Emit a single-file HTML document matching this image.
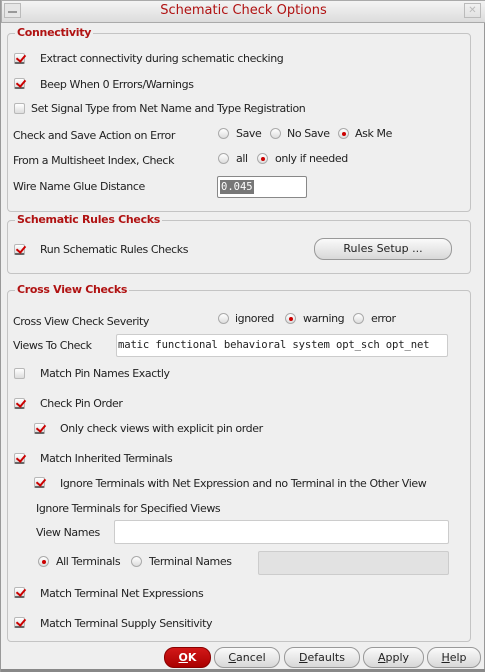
<!DOCTYPE html>
<html><head><style>
*{box-sizing:border-box;margin:0;padding:0}
body{width:485px;height:672px;background:#efefef;font-family:"DejaVu Sans","Liberation Sans",sans-serif;font-size:11px;color:#222;position:relative;overflow:hidden;border-left:1px solid #999;border-right:1px solid #999}
.a{position:absolute;white-space:nowrap}
.t{position:absolute;white-space:nowrap;line-height:13px;letter-spacing:-0.4px}
.box{position:absolute;border:1px solid #c4c4c4;border-radius:4px}
.lg{position:absolute;background:#efefef;color:#b01212;font-weight:bold;padding:0 2px;line-height:13px;font-size:11px;letter-spacing:-0.3px}
.cb{position:absolute;width:11px;height:11px;border:1px solid #b8b8b8;border-radius:2px;background:linear-gradient(#fff,#ddd)}
.cb.on::after{content:"";position:absolute;left:3px;top:-1px;width:4px;height:7px;border:solid #c00;border-width:0 2px 2px 0;transform:rotate(40deg)}
.cb.on{border-bottom:2px solid #666}
.rb{position:absolute;width:11px;height:11px;border:1px solid #aaa;border-radius:50%;background:linear-gradient(#fff,#ddd)}
.rb.on::after{content:"";position:absolute;left:2.5px;top:2.5px;width:4px;height:4px;border-radius:50%;background:#c00}
.in{position:absolute;background:#fff;border:1px solid #ccc;border-radius:2px}
.btn{position:absolute;border:1px solid #999;border-radius:10px;background:linear-gradient(#fafafa,#d8d8d8);text-align:center;line-height:19px;font-size:11px}
</style></head><body>
<div class="a" style="left:0;top:0;width:485px;height:23px;background:linear-gradient(#f4f4f4,#dcdcdc);border:1px solid #aaa"></div>
<div class="a" style="left:3px;top:3px;width:17px;height:15px;border:1px solid #bbb;background:#e6e6e6"></div>
<div class="a" style="left:7px;top:11px;width:9px;height:2px;background:#999"></div>
<div class="a" style="left:463px;top:3px;width:17px;height:15px;border:1px solid #bbb;color:#bbb;font-size:10px;text-align:center;line-height:14px">✕</div>
<div class="a" style="left:0;width:485px;top:3px;text-align:center;color:#b01212;font-size:13px">Schematic Check Options</div>

<div class="box" style="left:6px;top:33px;width:464px;height:179px"></div>
<div class="lg" style="left:14px;top:26px">Connectivity</div>
<div class="cb on" style="left:13px;top:53px"></div><div class="t" style="left:39px;top:52px">Extract connectivity during schematic checking</div>
<div class="cb on" style="left:13px;top:78px"></div><div class="t" style="left:39px;top:78px">Beep When 0 Errors/Warnings</div>
<div class="cb" style="left:13px;top:103px"></div><div class="t" style="left:30px;top:102px">Set Signal Type from Net Name and Type Registration</div>
<div class="t" style="left:12px;top:129px">Check and Save Action on Error</div>
<div class="rb" style="left:217px;top:128px"></div><div class="t" style="left:235px;top:127px">Save</div>
<div class="rb" style="left:269px;top:128px"></div><div class="t" style="left:286px;top:127px">No Save</div>
<div class="rb on" style="left:337px;top:128px"></div><div class="t" style="left:354px;top:127px">Ask Me</div>
<div class="t" style="left:12px;top:154px">From a Multisheet Index, Check</div>
<div class="rb" style="left:217px;top:153px"></div><div class="t" style="left:235px;top:152px">all</div>
<div class="rb on" style="left:256px;top:153px"></div><div class="t" style="left:274px;top:152px">only if needed</div>
<div class="t" style="left:12px;top:180px">Wire Name Glue Distance</div>
<div class="in" style="left:216px;top:176px;width:90px;height:22px;border-color:#888"></div>
<div class="a" style="left:219px;top:180px;background:#777;color:#fff;font-family:'DejaVu Sans Mono',monospace;font-size:10.5px;line-height:14px;padding:0 1px">0.045</div>

<div class="box" style="left:6px;top:220px;width:464px;height:54px"></div>
<div class="lg" style="left:14px;top:213px">Schematic Rules Checks</div>
<div class="cb on" style="left:13px;top:244px"></div><div class="t" style="left:39px;top:243px">Run Schematic Rules Checks</div>
<div class="btn" style="left:313px;top:238px;width:138px;height:22px;line-height:20px">Rules Setup ...</div>

<div class="box" style="left:6px;top:290px;width:464px;height:352px"></div>
<div class="lg" style="left:14px;top:283px">Cross View Checks</div>
<div class="t" style="left:12px;top:315px">Cross View Check Severity</div>
<div class="rb" style="left:217px;top:313px"></div><div class="t" style="left:234px;top:312px">ignored</div>
<div class="rb on" style="left:284px;top:313px"></div><div class="t" style="left:302px;top:312px">warning</div>
<div class="rb" style="left:352px;top:313px"></div><div class="t" style="left:370px;top:312px">error</div>
<div class="t" style="left:12px;top:339px">Views To Check</div>
<div class="in" style="left:115px;top:334px;width:332px;height:23px;overflow:hidden"><span class="a" style="left:1px;top:4px;font-family:'DejaVu Sans Mono',monospace;font-size:10.6px;letter-spacing:-0.15px">matic functional behavioral system opt_sch opt_net</span></div>
<div class="cb" style="left:13px;top:368px"></div><div class="t" style="left:39px;top:367px">Match Pin Names Exactly</div>
<div class="cb on" style="left:13px;top:398px"></div><div class="t" style="left:39px;top:397px">Check Pin Order</div>
<div class="cb on" style="left:33px;top:423px"></div><div class="t" style="left:59px;top:422px">Only check views with explicit pin order</div>
<div class="cb on" style="left:13px;top:453px"></div><div class="t" style="left:39px;top:452px">Match Inherited Terminals</div>
<div class="cb on" style="left:33px;top:477px"></div><div class="t" style="left:59px;top:477px">Ignore Terminals with Net Expression and no Terminal in the Other View</div>
<div class="t" style="left:35px;top:502px">Ignore Terminals for Specified Views</div>
<div class="t" style="left:35px;top:526px">View Names</div>
<div class="in" style="left:113px;top:520px;width:335px;height:24px"></div>
<div class="rb on" style="left:37px;top:556px"></div><div class="t" style="left:55px;top:555px">All Terminals</div>
<div class="rb" style="left:130px;top:556px"></div><div class="t" style="left:148px;top:555px">Terminal Names</div>
<div class="in" style="left:257px;top:551px;width:191px;height:24px;background:#e2e2e2"></div>
<div class="cb on" style="left:13px;top:587px"></div><div class="t" style="left:39px;top:587px">Match Terminal Net Expressions</div>
<div class="cb on" style="left:13px;top:617px"></div><div class="t" style="left:39px;top:617px">Match Terminal Supply Sensitivity</div>

<div class="btn" style="left:163px;top:647px;width:47px;height:21px;background:linear-gradient(#d21818,#a00);color:#fff;font-weight:bold;border-color:#800"><u>O</u>K</div>
<div class="btn" style="left:213px;top:647px;width:66px;height:21px"><u>C</u>ancel</div>
<div class="btn" style="left:283px;top:647px;width:76px;height:21px"><u>D</u>efaults</div>
<div class="btn" style="left:362px;top:647px;width:61px;height:21px"><u>A</u>pply</div>
<div class="btn" style="left:426px;top:647px;width:54px;height:21px"><u>H</u>elp</div>
<div class="a" style="left:0;top:669px;width:485px;height:3px;background:#888"></div>
</body></html>
